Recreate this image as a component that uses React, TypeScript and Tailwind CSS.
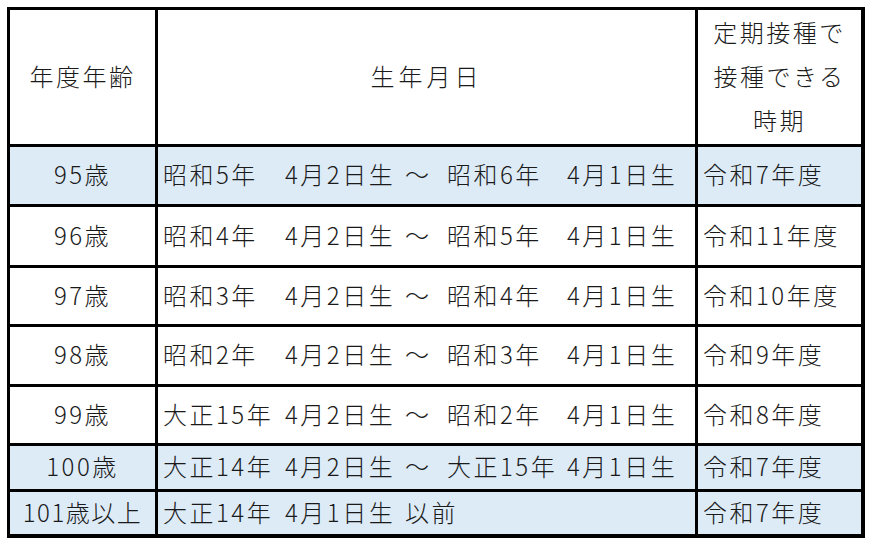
const rows = [
  { age: '95歳', from: ['昭和5年', '4月2日生'], to: ['昭和6年', '4月1日生'], when: '令和7年度', blue: true },
  { age: '96歳', from: ['昭和4年', '4月2日生'], to: ['昭和5年', '4月1日生'], when: '令和11年度', blue: false },
  { age: '97歳', from: ['昭和3年', '4月2日生'], to: ['昭和4年', '4月1日生'], when: '令和10年度', blue: false },
  { age: '98歳', from: ['昭和2年', '4月2日生'], to: ['昭和3年', '4月1日生'], when: '令和9年度', blue: false },
  { age: '99歳', from: ['大正15年', '4月2日生'], to: ['昭和2年', '4月1日生'], when: '令和8年度', blue: false },
  { age: '100歳', from: ['大正14年', '4月2日生'], to: ['大正15年', '4月1日生'], when: '令和7年度', blue: true },
];

function Seg({ children, w }: { children: React.ReactNode; w: string }) {
  return <span className={`inline-block whitespace-nowrap ${w}`}>{children}</span>;
}

export default function App() {
  return (
    <div
      className="w-[872px] h-[545px] bg-white pl-[7px] pt-[7px] text-[24px] font-light leading-none tracking-[2.5px] text-[#1a1a1a]"
      style={{ fontFamily: '"Noto Sans CJK JP", "Noto Sans", sans-serif' }}
    >
      <div className="grid w-[858px] grid-cols-[145px_537px_163px] grid-rows-[134px_57px_58px_56px_57px_56px_43px_42px] gap-[3px] bg-black pt-[3px] pr-[4px] pb-[4px] pl-[3px]">
        {/* header */}
        <div className="flex items-center justify-center bg-white pb-[3px]">年度年齢</div>
        <div className="flex items-center justify-center bg-white pb-[3px] tracking-[4px]">生年月日</div>
        <div className="flex flex-col items-center justify-center bg-white pb-[3px] leading-[44px]">
          <span>定期接種で</span>
          <span>接種できる</span>
          <span>時期</span>
        </div>

        {rows.map((r) => {
          const bg = r.blue ? 'bg-[#ddebf7]' : 'bg-white';
          return (
            <>
              <div key={r.age + 'a'} className={`flex items-center justify-center pb-[3px] ${bg}`}>{r.age}</div>
              <div key={r.age + 'b'} className={`flex items-center pb-[3px] pl-[5px] ${bg}`}>
                <Seg w="w-[122px]">{r.from[0]}</Seg>
                <Seg w="w-[120px]">{r.from[1]}</Seg>
                <Seg w="w-[42px]">～</Seg>
                <Seg w="w-[120px]">{r.to[0]}</Seg>
                <Seg w="w-[116px]">{r.to[1]}</Seg>
              </div>
              <div key={r.age + 'c'} className={`flex items-center pb-[3px] pl-[5px] ${bg}`}>{r.when}</div>
            </>
          );
        })}

        <div className="flex items-center justify-center bg-[#ddebf7] pb-[3px] tracking-[1.5px]">101歳以上</div>
        <div className="flex items-center bg-[#ddebf7] pb-[3px] pl-[5px]">
          <Seg w="w-[122px]">大正14年</Seg>
          <Seg w="w-[120px]">4月1日生</Seg>
          <span>以前</span>
        </div>
        <div className="flex items-center bg-[#ddebf7] pb-[3px] pl-[5px]">令和7年度</div>
      </div>
    </div>
  );
}
